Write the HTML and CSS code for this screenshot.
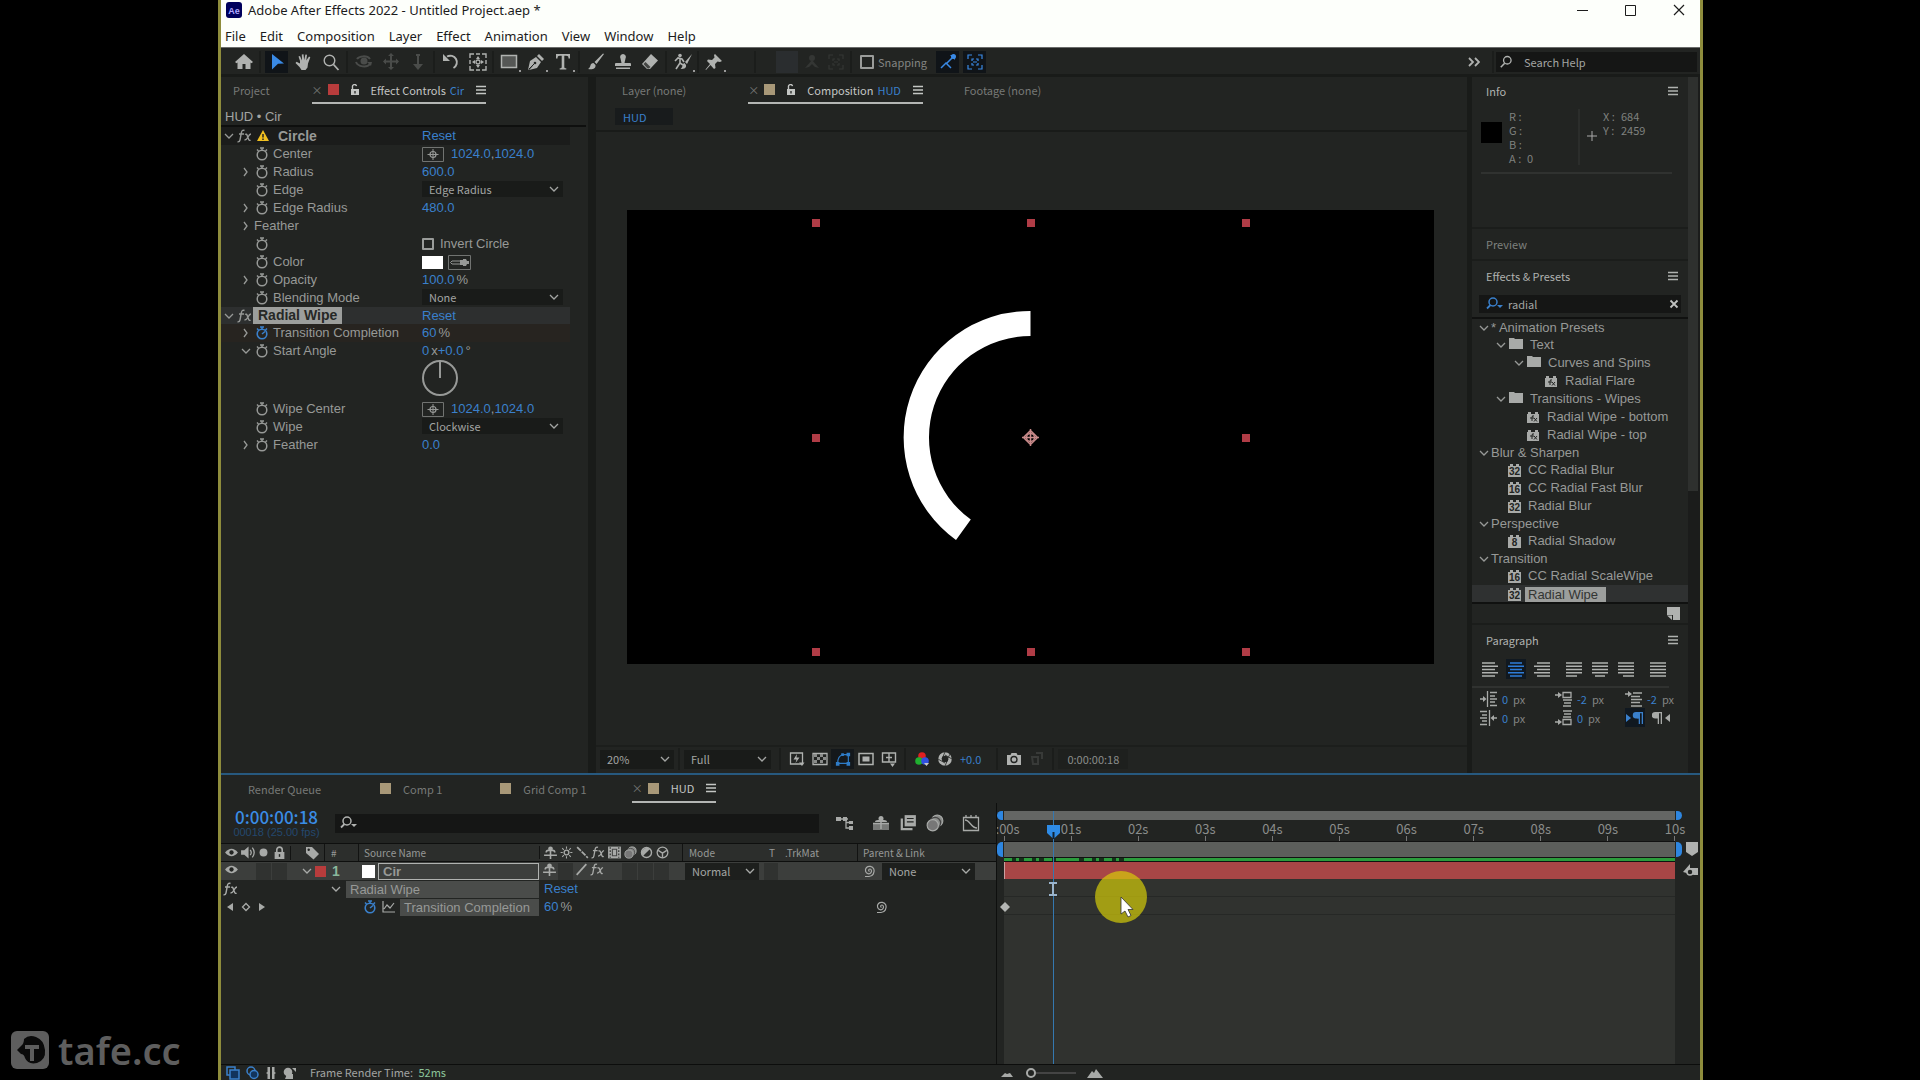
FILE: index.html
```html
<!DOCTYPE html>
<html lang="en">
<head>
<meta charset="utf-8">
<title>Adobe After Effects 2022 - Untitled Project.aep *</title>
<link rel="stylesheet" href="styles.css">
</head>
<body>
<svg class="sprite" aria-hidden="true">
  <symbol id="down" viewBox="0 0 10 10"><path d="M1 3l4 4 4-4" fill="none" stroke="currentColor" stroke-width="1.3"/></symbol>
  <symbol id="right" viewBox="0 0 10 10"><path d="M3 1l3 4-3 4" fill="none" stroke="currentColor" stroke-width="1.3"/></symbol>
  <symbol id="burger" viewBox="0 0 10 10"><path d="M0 1.5h10M0 5h10M0 8.500h10" stroke="currentColor" stroke-width="1.300"/></symbol>
  <symbol id="lock" viewBox="0 0 12 12"><path d="M2 5h8v6H2z" fill="currentColor"/><path d="M3.500 5V3a2 2 0 0 1 4-.8" fill="none" stroke="currentColor" stroke-width="1.400"/><path d="M6 7v2.500" stroke="#222422" stroke-width="1.300"/></symbol>
  <symbol id="padlock" viewBox="0 0 12 12"><path d="M1.500 5.500h9V12h-9z" fill="currentColor"/><path d="M3.500 5.500V3.500a2.500 2.500 0 0 1 5 0v2" fill="none" stroke="currentColor" stroke-width="1.500"/><path d="M6 7.500v2.500" stroke="#222422" stroke-width="1.300"/></symbol>
  <symbol id="watch" viewBox="0 0 14 14"><circle cx="7" cy="8" r="4.800" fill="none" stroke="currentColor" stroke-width="1.500"/><path d="M5 1h4M7 1v2.500M2 2.500l1.500 1.500M12 2.500l-1.500 1.500" stroke="currentColor" stroke-width="1.400"/></symbol>
  <symbol id="watchon" viewBox="0 0 14 14"><circle cx="7" cy="8" r="4.800" fill="none" stroke="currentColor" stroke-width="1.600"/><path d="M5 1h4M7 1v2.500M2 2.500l1.500 1.500M12 2.500l-1.500 1.500M7 8l3-2.500" stroke="currentColor" stroke-width="1.500"/></symbol>
  <symbol id="search" viewBox="0 0 16 16"><circle cx="9.500" cy="6" r="4.300" fill="none" stroke="currentColor" stroke-width="1.500"/><path d="M6.500 9.500L2 14" stroke="currentColor" stroke-width="1.800"/></symbol>
  <symbol id="searchmenu" viewBox="0 0 20 16"><circle cx="8" cy="6" r="4" fill="none" stroke="currentColor" stroke-width="1.500"/><path d="M5.500 9L2 12.500" stroke="currentColor" stroke-width="1.800"/><path d="M12 9h6l-3 3z" fill="currentColor"/></symbol>
  <symbol id="zoom" viewBox="0 0 18 18"><circle cx="7.500" cy="7.500" r="5.300" fill="none" stroke="currentColor" stroke-width="1.400"/><path d="M11.500 11.500L16.500 17" stroke="currentColor" stroke-width="1.800"/></symbol>
  <symbol id="home" viewBox="0 0 18 18"><path d="M9 1l9 8-1.500 1.300L15.500 9.500V16h-5v-5h-3v5h-5V9.500l-1 .8L0 9z" fill="currentColor"/></symbol>
  <symbol id="arrow" viewBox="0 0 18 18"><path d="M4 1l12 9.500-6 .3L4 16.500z" fill="currentColor"/></symbol>
  <symbol id="hand" viewBox="0 0 18 18"><path d="M5 8L3.500 3.500 5 3l2 4.500L6.800 1.500 8.500 1.300 9.200 7l1.200-5.500 1.600.3L11.300 7.500 14 3.500l1.300.8L13 10.500l-.5 4L10.500 17h-4L4.500 14 .5 10l1-1.300L5 10.500z" fill="currentColor"/></symbol>
  <symbol id="orbit" viewBox="0 0 18 18"><path d="M2 6c2-3 10-4 13 0M1 9c2 5 11 6 14 2" fill="none" stroke="currentColor" stroke-width="2"/><circle cx="9" cy="8" r="3.500" fill="currentColor"/><path d="M12 9l5 0-1 4z" fill="currentColor"/></symbol>
  <symbol id="pan" viewBox="0 0 18 18"><path d="M9 2v13M2 8.500h14" stroke="currentColor" stroke-width="2"/><path d="M9 0l3 3H6zM9 17l-3-3h6zM1 8.500l3-3v6zM17 8.500l-3-3v6z" fill="currentColor"/></symbol>
  <symbol id="dolly" viewBox="0 0 18 18"><path d="M9 1v12M7 2h4" stroke="currentColor" stroke-width="2"/><path d="M4 11h10l-5 6z" fill="currentColor"/></symbol>
  <symbol id="rotate" viewBox="0 0 18 18"><path d="M5 3.500a6.300 6.300 0 1 1 6.500 11.500" fill="none" stroke="currentColor" stroke-width="2"/><path d="M1 1v7h7z" fill="currentColor"/></symbol>
  <symbol id="anchor" viewBox="0 0 18 18"><path d="M1 5V1h4M13 1h4v4M17 13v4h-4M5 17H1v-4M7 1h4M7 17h4M1 7v4M17 7v4" fill="none" stroke="currentColor" stroke-width="1.400"/><path d="M9 3l2 3H7zM9 15l-2-3h4zM3 9l3-2v4zM15 9l-3 2V7z" fill="currentColor"/><circle cx="9" cy="9" r="2" fill="none" stroke="currentColor" stroke-width="1.300"/></symbol>
  <symbol id="rect" viewBox="0 0 18 18"><path d="M1.500 2.500h15v12h-15z" fill="#555755" stroke="currentColor" stroke-width="1.500"/></symbol>
  <symbol id="pen" viewBox="0 0 18 18"><path d="M1 17l2-9 6-4 5 5-4 6-8 2 4.500-4.500" fill="currentColor"/><path d="M10 3l2-2 5 5-2 2z" fill="currentColor"/><path d="M2 16l5-5" stroke="#222422"/><circle cx="8" cy="10" r="1.300" fill="#222422"/></symbol>
  <symbol id="type" viewBox="0 0 18 18"><path d="M2 1h14v4.500h-1.500c0-2-.5-2.700-2.500-2.700h-1.700V14c0 1 .5 1.300 2 1.300V16.500H5.700v-1.200c1.500 0 2-.3 2-1.300V2.800H6c-2 0-2.500.7-2.500 2.700H2z" fill="currentColor"/></symbol>
  <symbol id="brush" viewBox="0 0 18 18"><path d="M17 1l-1-.5L7.500 9l2 2zM6.500 10c-4 0-2 4-5.500 6 4 1 8 0 7.500-4z" fill="currentColor"/></symbol>
  <symbol id="stamp" viewBox="0 0 18 18"><path d="M9 1a3 3 0 0 1 2.500 4.500L10.500 10H16q1 0 1 1v2H1v-2q0-1 1-1h5.500L6.500 5.500A3 3 0 0 1 9 1zM2 14.500h14V16H2z" fill="currentColor"/></symbol>
  <symbol id="eraser" viewBox="0 0 18 18"><path d="M10 1l7 6.500L9 16H6l-5-5z" fill="currentColor"/><path d="M4.500 9l5 5-1.500 1.500H6.500L2.500 11z" fill="#444644"/></symbol>
  <symbol id="roto" viewBox="0 0 18 18"><circle cx="6" cy="2.500" r="1.800" fill="currentColor"/><path d="M1 8l3-3 4 1 2 3M6 5v5l-4 6M6 10l3 2" fill="none" stroke="currentColor" stroke-width="1.600"/><path d="M18 1l-7 8 2 2zM10.500 10c-3 1-1 4-4 6 4 0 6-1 5.500-4z" fill="currentColor"/></symbol>
  <symbol id="pin" viewBox="0 0 18 18"><path d="M10 1l7 7-2 1-2.500-.5L10 11l.5 4-1.500 1-3.500-4L1 17l-.5-.5L5 11 2 8l1-1.500L7 7l2.500-2.500L9 2z" fill="currentColor"/></symbol>
  <symbol id="snap1" viewBox="0 0 18 18"><path d="M2 15l5-5 5 5M8 10l6-6" fill="none" stroke="currentColor" stroke-width="1.500"/><path d="M11 2h5v5z" fill="currentColor"/><circle cx="14.500" cy="3.500" r="2.500" fill="currentColor"/></symbol>
  <symbol id="snap2" viewBox="0 0 18 18"><path d="M2 6V2h4M12 2h4v4M16 12v4h-4M6 16H2v-4M6 8V6h2M10 6h2v2M12 10v2h-2M8 12H6v-2M7 9h4" fill="none" stroke="currentColor" stroke-width="1.200"/></symbol>
  <symbol id="people" viewBox="0 0 18 18"><circle cx="9" cy="5" r="3" fill="currentColor"/><path d="M2 15l7-8 7 8-4-1-3-3-3 3z" fill="currentColor"/></symbol>
  <symbol id="warn" viewBox="0 0 14 14"><path d="M7 1l6 11H1z" fill="#f0c020"/><path d="M7 5v3.500M7 9.500v1.500" stroke="#222" stroke-width="1.500"/></symbol>
  <symbol id="target" viewBox="0 0 22 15"><path d="M.5.500h21v14H.5z" fill="none" stroke="#717371"/><circle cx="11" cy="7.500" r="3" fill="none" stroke="currentColor" stroke-width="1.200"/><path d="M5.500 7.500h11M11 2v11" stroke="currentColor"/></symbol>
  <symbol id="dropper" viewBox="0 0 24 15"><path d="M.5.500h22v14H.5z" fill="none" stroke="#717371"/><path d="M2.500 7.500L4 6h9v3H4z" fill="none" stroke="currentColor"/><path d="M12 5h3V4h3l1 2h2v3h-2l-1 2h-3v-1h-3z" fill="currentColor"/></symbol>
  <symbol id="fx" viewBox="0 0 16 14"><path d="M7.500 1.500C5.500.5 4.700 2 4.300 4L3 11c-.4 2-1.200 2-2.500 1.800M2 5h5M8 5.500q1.500-1 2.200 1l1.500 4q.6 1.500 1.800.5M14 5q-1.500 0-3 3t-3.500 3" fill="none" stroke="currentColor" stroke-width="1.400"/></symbol>
  <symbol id="folder" viewBox="0 0 16 12"><path d="M1 0h5l1 1h8v10H1z" fill="currentColor"/></symbol>
  <symbol id="preset" viewBox="0 0 14 13"><path d="M1 3h1V1h3v2h4V1h3v2h1v9H1z" fill="currentColor"/><path d="M8 5q-2-1-2 1.500V10M4 7h4M8 7l3 3.500M11 7l-3 3.500" stroke="#222422" fill="none"/></symbol>
  <symbol id="newitem" viewBox="0 0 13 13"><path d="M0 0h13v13H6V8H0z" fill="currentColor"/><path d="M0 8.500h5v4.500z" fill="currentColor"/></symbol>
  <symbol id="al" viewBox="0 0 16 15"><path d="M0 1h13M0 4.200h16M0 7.500h13M0 10.700h16M0 14h13" stroke="currentColor" stroke-width="1.400"/></symbol>
  <symbol id="ac" viewBox="0 0 16 15"><path d="M2 1h12M0 4.200h16M2 7.500h12M0 10.700h16M2 14h12" stroke="currentColor" stroke-width="1.400"/></symbol>
  <symbol id="ar" viewBox="0 0 16 15"><path d="M3 1h13M0 4.200h16M3 7.500h13M0 10.700h16M3 14h13" stroke="currentColor" stroke-width="1.400"/></symbol>
  <symbol id="jl" viewBox="0 0 16 15"><path d="M0 1h16M0 4.200h16M0 7.500h16M0 10.700h16M0 14h11" stroke="currentColor" stroke-width="1.400"/></symbol>
  <symbol id="jc" viewBox="0 0 16 15"><path d="M0 1h16M0 4.200h16M0 7.500h16M0 10.700h16M3 14h10" stroke="currentColor" stroke-width="1.400"/></symbol>
  <symbol id="jr" viewBox="0 0 16 15"><path d="M0 1h16M0 4.200h16M0 7.500h16M0 10.700h16M5 14h11" stroke="currentColor" stroke-width="1.400"/></symbol>
  <symbol id="jf" viewBox="0 0 16 15"><path d="M0 1h16M0 4.200h16M0 7.500h16M0 10.700h16M0 14h16" stroke="currentColor" stroke-width="1.400"/></symbol>
  <symbol id="indl" viewBox="0 0 17 16"><path d="M0 8h5M7.500 0v16M10 1.500h7M10 5h5M10 8h7M10 11h5M10 14.500h7" stroke="currentColor" stroke-width="1.300"/><path d="M3 5l3.500 3L3 11z" fill="currentColor"/></symbol>
  <symbol id="indr" viewBox="0 0 17 16"><path d="M17 8h-5M9.500 0v16M0 1.500h7M2 5h5M0 8h7M2 11h5M0 14.500h7" stroke="currentColor" stroke-width="1.300"/><path d="M14 5l-3.500 3 3.500 3z" fill="currentColor"/></symbol>
  <symbol id="spb" viewBox="0 0 17 16"><path d="M0 4h5M8 1.500h8v5H8zM8 9h9M9 12h7M8 15h8" fill="none" stroke="currentColor" stroke-width="1.300"/><path d="M3 1l4 3-4 3z" fill="currentColor"/></symbol>
  <symbol id="spa" viewBox="0 0 17 16"><path d="M0 12h5M8 9.500h8v5H8zM8 1h9M9 4h7M8 7h8" fill="none" stroke="currentColor" stroke-width="1.300"/><path d="M3 9l4 3-4 3z" fill="currentColor"/></symbol>
  <symbol id="first" viewBox="0 0 17 16"><path d="M0 3h5M8 2h9M6 5.500h9M6 8.500h11M6 11.500h9M6 15h11" stroke="currentColor" stroke-width="1.300"/><path d="M3 0l4 3-4 3z" fill="currentColor"/></symbol>
  <symbol id="ltr" viewBox="0 0 18 14"><path d="M0 3l5 4-5 4zM17 1v12h-1.300V2.300h-1.700V13h-1.300V7.500a3 3 0 0 1 0-6.500z" fill="currentColor"/><path d="M12.700 1H10a3 3 0 0 0 0 6.500h2.700z" fill="currentColor"/></symbol>
  <symbol id="rtl" viewBox="0 0 18 14"><path d="M18 3l-5 4 5 4zM10 1v12H8.700V2.300H7V13H5.700V7.500H3A3 3 0 0 1 3 1z" fill="currentColor"/></symbol>
  <symbol id="fast" viewBox="0 0 16 16"><path d="M1.500 2h12v11h-12z" fill="none" stroke="currentColor" stroke-width="1.300"/><path d="M8 3L4.500 8.500h3L6.500 12 10.500 6.500h-3z" fill="currentColor"/><path d="M10 11.500h5.500L13 15z" fill="currentColor"/></symbol>
  <symbol id="grid" viewBox="0 0 16 16"><path d="M1 2.500h14v11H1z" fill="none" stroke="currentColor" stroke-width="1.300"/><path d="M2 3h3v3H2zM8 3h3v3H8zM5 6h3v3H5zM11 6h3v3h-3zM2 9h3v3H2zM8 9h3v3H8z" fill="#8a8c8a"/></symbol>
  <symbol id="mask" viewBox="0 0 18 18"><path d="M3 14c0-5 2-9 6-10h6v10z" fill="none" stroke="currentColor" stroke-width="1.300"/><path d="M1 12.500h4v4H1zM13 12.500h4v4h-4zM13 2h4v4h-4zM7 2.500h3v3H7z" fill="currentColor"/></symbol>
  <symbol id="roi" viewBox="0 0 16 16"><path d="M1 2.500h14v11H1z" fill="none" stroke="currentColor" stroke-width="1.500"/><path d="M4.500 5.500h7v5h-7z" fill="currentColor"/></symbol>
  <symbol id="guides" viewBox="0 0 16 16"><path d="M1.500 2h13v9h-13zM8 2v9M5 6.500h6" fill="none" stroke="currentColor" stroke-width="1.400"/><path d="M9 12.500h5L11.500 16z" fill="currentColor"/></symbol>
  <symbol id="rgb" viewBox="0 0 16 16"><circle cx="8" cy="5" r="3.800" fill="#e02020"/><circle cx="5" cy="10" r="3.800" fill="#20b030"/><circle cx="11" cy="10" r="3.800" fill="#3050e0"/><path d="M10 12h5l-2.500 3z" fill="#c8c8c8"/></symbol>
  <symbol id="iris" viewBox="0 0 16 16"><circle cx="8" cy="8" r="5" fill="none" stroke="currentColor" stroke-width="3.600"/><path d="M8 1l-3 7M15 8L8 4M8 15l3-7M1 8l7 4M13 3L9 11" stroke="#222422" stroke-width=".8"/></symbol>
  <symbol id="camera" viewBox="0 0 16 16"><path d="M1 4h3.500l1-2h5l1 2H15v10H1z" fill="currentColor"/><circle cx="8" cy="8.500" r="3" fill="none" stroke="#222422" stroke-width="1.400"/></symbol>
  <symbol id="ghost" viewBox="0 0 16 16"><path d="M7 2h6v6M3 6h6v7H4z" fill="none" stroke="currentColor" stroke-width="2"/></symbol>
  <symbol id="flow" viewBox="0 0 18 16"><path d="M0 2h5v4H0zM7 2h4v4H7zM13 6h4v3h-4zM13 11h4v4h-4z" fill="currentColor"/><path d="M4 4h8M10 4v9h4M10 7.500h3" stroke="currentColor" fill="none" stroke-width="1.300"/></symbol>
  <symbol id="shyall" viewBox="0 0 18 16"><path d="M1 9h16v6H1z" fill="#777977"/><path d="M3 7q0-2 3-2h6q3 0 3 2z" fill="currentColor"/><path d="M9 2v12M1 8.500h16" stroke="currentColor" stroke-width="1.500"/><circle cx="9" cy="3.500" r="2.500" fill="currentColor"/></symbol>
  <symbol id="frames" viewBox="0 0 16 16"><path d="M5 1h10v10H5z" fill="currentColor"/><path d="M2.500 4v9.500H12" fill="none" stroke="currentColor" stroke-width="2"/><path d="M7 4h6M7 7h6" stroke="#222422"/></symbol>
  <symbol id="blur" viewBox="0 0 16 16"><circle cx="10" cy="6" r="5" fill="#8a8c8a" stroke="currentColor"/><circle cx="8" cy="8" r="5" fill="#8a8c8a" stroke="#444"/><circle cx="6" cy="10" r="5" fill="#777" stroke="currentColor"/></symbol>
  <symbol id="graph" viewBox="0 0 18 18"><path d="M1.500 3.500h15v13h-15zM4 1v3M9 1v3M14 1v3" fill="none" stroke="currentColor" stroke-width="1.300"/><path d="M3 6c5 0 6 8 12 8" fill="none" stroke="currentColor" stroke-width="1.300"/></symbol>
  <symbol id="minigraph" viewBox="0 0 14 12"><path d="M1 0v11h12M2 8l3-4 3 3 4-5" fill="none" stroke="currentColor" stroke-width="1.200"/></symbol>
  <symbol id="eye" viewBox="0 0 14 12"><path d="M1 6q6-7 12 0-6 7-12 0z" fill="currentColor"/><circle cx="7" cy="6" r="2" fill="#222422"/></symbol>
  <symbol id="speaker" viewBox="0 0 14 12"><path d="M1 4h3l4-3.500v11L4 8H1z" fill="currentColor"/><path d="M9.500 3.500q2 2.500 0 5M11.500 1.500q3.500 4.500 0 9" fill="none" stroke="currentColor" stroke-width="1.200"/></symbol>
  <symbol id="dot" viewBox="0 0 14 12"><circle cx="7" cy="6" r="3.700" fill="currentColor"/></symbol>
  <symbol id="tag" viewBox="0 0 14 14"><path d="M1 1h6l7 7-5.500 5.500L1 7z" fill="currentColor"/><circle cx="3.700" cy="3.700" r="1.200" fill="#222422"/></symbol>
  <symbol id="shy" viewBox="0 0 14 12"><path d="M1 8.500h12M7 3v9M3 6q0-2 2-2h4q2 0 2 2" fill="none" stroke="currentColor" stroke-width="1.500"/><circle cx="7" cy="2.500" r="2.200" fill="currentColor"/></symbol>
  <symbol id="sun" viewBox="0 0 14 12"><circle cx="7" cy="6" r="2.200" fill="none" stroke="currentColor" stroke-width="1.300"/><path d="M7 .5v2M7 9.500v2M1.500 6h2M10.500 6h2M3 2l1.500 1.500M11 2L9.500 3.500M3 10l1.500-1.500M11 10L9.500 8.500" stroke="currentColor"/></symbol>
  <symbol id="back" viewBox="0 0 14 12"><path d="M2 1l10 10" stroke="currentColor" stroke-width="1.600" stroke-dasharray="5 1"/></symbol>
  <symbol id="slash" viewBox="0 0 14 12"><path d="M2.500 11l9-10" stroke="currentColor" stroke-width="1.600"/></symbol>
  <symbol id="film" viewBox="0 0 14 12"><path d="M1 .5h12v11H1z" fill="currentColor"/><path d="M3 1v10M11 1v10" stroke="#222422" stroke-dasharray="1.500 1.500"/><path d="M5 3h4v6H5z" fill="none" stroke="#444644"/></symbol>
  <symbol id="half" viewBox="0 0 14 12"><circle cx="7" cy="6" r="4.700" fill="none" stroke="currentColor" stroke-width="1.300"/><path d="M10.300 2.700A4.700 4.700 0 0 0 3.700 9.300z" fill="currentColor"/></symbol>
  <symbol id="cube" viewBox="0 0 14 12"><circle cx="7" cy="6" r="5" fill="none" stroke="currentColor" stroke-width="1.200"/><path d="M7 11V6.500L3 4M7 6.500L11 4" fill="none" stroke="currentColor" stroke-width="1.300"/></symbol>
  <symbol id="spiral" viewBox="0 0 14 14"><path d="M7.500 7.500a1.300 1.300 0 1 1 1.500-2c1.500 2-.5 4.800-3 4.200S2.500 5.500 4.500 3.500 10.500 2 11.800 5s-.8 7.500-4.800 7.500H3" fill="none" stroke="currentColor" stroke-width="1.200"/></symbol>
  <symbol id="tri-l" viewBox="0 0 10 10"><path d="M8 1v8L2 5z" fill="currentColor"/></symbol>
  <symbol id="tri-r" viewBox="0 0 10 10"><path d="M2 1v8l6-4z" fill="currentColor"/></symbol>
  <symbol id="kf" viewBox="0 0 10 10"><path d="M5 1.500L8.500 5 5 8.500 1.500 5z" fill="none" stroke="currentColor" stroke-width="1.300"/></symbol>
  <symbol id="minimize" viewBox="0 0 12 12"><path d="M0 6.500h11" stroke="currentColor"/></symbol>
  <symbol id="maximize" viewBox="0 0 12 12"><path d="M.5 1.500h10v10H.5z" fill="none" stroke="currentColor"/></symbol>
  <symbol id="close" viewBox="0 0 12 12"><path d="M1 1l10 10M11 1L1 11" stroke="currentColor" stroke-width="1.200"/></symbol>
  <symbol id="more" viewBox="0 0 12 10"><path d="M1 1l4 4-4 4M7 1l4 4-4 4" fill="none" stroke="currentColor" stroke-width="1.800"/></symbol>
  <symbol id="stack" viewBox="0 0 14 14"><path d="M1 1h8v8H1z" fill="none" stroke="currentColor" stroke-width="1.500"/><path d="M4 4h9v9H4z" fill="#12345c" stroke="currentColor" stroke-width="1.500"/></symbol>
  <symbol id="rings" viewBox="0 0 14 14"><circle cx="6" cy="5" r="4" fill="none" stroke="currentColor" stroke-width="1.500"/><circle cx="9" cy="8.500" r="4" fill="#12345c" stroke="currentColor" stroke-width="1.500"/></symbol>
  <symbol id="braces" viewBox="0 0 14 14"><path d="M6 1H3.500v5L2 7l1.500 1v5H6zM8 1h2.500v5L12 7l-1.500 1v5H8z" fill="currentColor"/></symbol>
  <symbol id="render" viewBox="0 0 14 14"><circle cx="5" cy="6" r="4.300" fill="currentColor"/><path d="M4 8h6v5H2zM9 2h4v4z" fill="currentColor"/></symbol>
  <symbol id="marker" viewBox="0 0 12 14"><path d="M0 0h12v10l-6 4-6-4z" fill="currentColor"/></symbol>
  <symbol id="compbtn" viewBox="0 0 16 14"><path d="M0 9l7-8v4h8v7h-4z" fill="currentColor"/><circle cx="7" cy="9" r="3" fill="#222422" stroke="currentColor" stroke-width="1.500"/></symbol>
  <symbol id="hill1" viewBox="0 0 16 10"><path d="M2 9l4-4 2 1 3-1 3 4z" fill="currentColor"/></symbol>
  <symbol id="hill2" viewBox="0 0 16 10"><path d="M0 10l5-7 2 2 2-4 7 9z" fill="currentColor"/></symbol>
</svg>

<div class="watermark">
  <svg viewBox="0 0 40 40"><rect x="1" y="1" width="38" height="38" rx="6" fill="#5e5e5e"/><path d="M14 9q5-5 12-2 8 3 9 13t-8 13q-9 2-12-5-1-4-4-4l-4-4 4-4q3-2 3-7z" fill="#0a0a0a"/><path d="M15 15h14v4h-5v12h-4V19h-5z" fill="#5e5e5e"/></svg>
  <span>tafe.cc</span>
</div>

<div class="app">
  <header class="titlebar">
    <svg class="logo" viewBox="0 0 16 16"><rect width="16" height="16" rx="3" fill="#00005b"/><text x="8" y="12" text-anchor="middle">Ae</text></svg>
    <h1>Adobe After Effects 2022 - Untitled Project.aep *</h1>
    <div class="winbtns">
      <button aria-label="Minimize"><svg class="i12"><use href="#minimize"/></svg></button>
      <button aria-label="Maximize"><svg class="i12"><use href="#maximize"/></svg></button>
      <button aria-label="Close"><svg class="i12"><use href="#close"/></svg></button>
    </div>
  </header>
  <nav class="menubar">
    <button>File</button><button>Edit</button><button>Composition</button><button>Layer</button><button>Effect</button><button>Animation</button><button>View</button><button>Window</button><button>Help</button>
  </nav>

  <div class="toolbar">
    <button class="tool" aria-label="Home"><svg><use href="#home"/></svg></button><i class="sep"></i>
    <button class="tool on" aria-label="Selection"><svg><use href="#arrow"/></svg></button>
    <button class="tool" aria-label="Hand"><svg><use href="#hand"/></svg></button>
    <button class="tool" aria-label="Zoom"><svg><use href="#zoom"/></svg></button><i class="sep"></i>
    <button class="tool off" aria-label="Orbit"><svg><use href="#orbit"/></svg></button>
    <button class="tool off" aria-label="Pan"><svg><use href="#pan"/></svg></button>
    <button class="tool off" aria-label="Dolly"><svg><use href="#dolly"/></svg></button><i class="sep"></i>
    <button class="tool" aria-label="Rotate"><svg><use href="#rotate"/></svg></button>
    <button class="tool" aria-label="Anchor point"><svg><use href="#anchor"/></svg></button><i class="sep thin"></i>
    <button class="tool sub" aria-label="Rectangle"><svg><use href="#rect"/></svg></button>
    <button class="tool sub" aria-label="Pen"><svg><use href="#pen"/></svg></button>
    <button class="tool sub" aria-label="Type"><svg><use href="#type"/></svg></button><i class="sep"></i>
    <button class="tool" aria-label="Brush"><svg><use href="#brush"/></svg></button>
    <button class="tool" aria-label="Clone stamp"><svg><use href="#stamp"/></svg></button>
    <button class="tool" aria-label="Eraser"><svg><use href="#eraser"/></svg></button><i class="sep"></i>
    <button class="tool sub" aria-label="Roto brush"><svg><use href="#roto"/></svg></button><i class="sep thin"></i>
    <button class="tool sub" aria-label="Puppet pin"><svg><use href="#pin"/></svg></button>
    <i class="sep wide"></i>
    <button class="tool dim fill" aria-label="Fill"></button>
    <button class="tool dim" aria-label="Stroke"><svg><use href="#people"/></svg></button>
    <button class="tool dim" aria-label="Shape"><svg><use href="#snap2"/></svg></button><i class="sep"></i>
    <label class="snapping"><input type="checkbox">Snapping</label>
    <button class="tool on" aria-label="Snap to edges"><svg><use href="#snap1"/></svg></button>
    <button class="tool on" aria-label="Snap to features"><svg><use href="#snap2"/></svg></button>
    <div class="toolend">
      <button class="tool more" aria-label="More"><svg class="i12"><use href="#more"/></svg></button><i class="sep"></i>
      <label class="helpsearch"><svg class="i14"><use href="#search"/></svg><input type="text" placeholder="Search Help" aria-label="Search Help"></label>
    </div>
  </div>

  <main class="panels">
    <section class="controls">
      <div class="tabs">
        <button class="tab first">Project</button>
        <div class="tab active"><span class="x">×</span><i class="chip red"></i><svg class="i12"><use href="#lock"/></svg><button>Effect Controls <b>Cir</b></button><svg class="i10"><use href="#burger"/></svg></div>
      </div>
      <p class="path">HUD • Cir</p>
      <div class="props">
        <div class="prop head"><div class="name"><svg class="tw"><use href="#down"/></svg><svg class="fx"><use href="#fx"/></svg><svg class="i14 mid"><use href="#warn"/></svg><strong>Circle</strong></div><button>Reset</button></div>
        <div class="prop l1"><div class="name"><i class="tw"></i><svg class="sw"><use href="#watch"/></svg>Center</div><svg class="pt"><use href="#target"/></svg><button>1024.0</button>,<button>1024.0</button></div>
        <div class="prop l1"><div class="name"><svg class="tw"><use href="#right"/></svg><svg class="sw"><use href="#watch"/></svg>Radius</div><button>600.0</button></div>
        <div class="prop l1"><div class="name"><i class="tw"></i><svg class="sw"><use href="#watch"/></svg><label for="edge">Edge</label></div><span class="pick"><select id="edge"><option>Edge Radius</option></select><svg class="i10"><use href="#down"/></svg></span></div>
        <div class="prop l1"><div class="name"><svg class="tw"><use href="#right"/></svg><svg class="sw"><use href="#watch"/></svg>Edge Radius</div><button>480.0</button></div>
        <div class="prop l1"><div class="name"><svg class="tw"><use href="#right"/></svg>Feather</div></div>
        <div class="prop l1"><div class="name"><i class="tw"></i><svg class="sw"><use href="#watch"/></svg></div><label class="check"><input type="checkbox">Invert Circle</label></div>
        <div class="prop l1"><div class="name"><i class="tw"></i><svg class="sw"><use href="#watch"/></svg>Color</div><button class="white" aria-label="Color"></button><svg class="eyed"><use href="#dropper"/></svg></div>
        <div class="prop l1"><div class="name"><svg class="tw"><use href="#right"/></svg><svg class="sw"><use href="#watch"/></svg>Opacity</div><button>100.0</button><span class="unit">%</span></div>
        <div class="prop l1"><div class="name"><i class="tw"></i><svg class="sw"><use href="#watch"/></svg><label for="blend">Blending Mode</label></div><span class="pick"><select id="blend"><option>None</option></select><svg class="i10"><use href="#down"/></svg></span></div>
        <div class="prop head sel"><div class="name"><svg class="tw"><use href="#down"/></svg><svg class="fx"><use href="#fx"/></svg><strong>Radial Wipe</strong></div><button>Reset</button></div>
        <div class="prop l1 keyed"><div class="name"><svg class="tw"><use href="#right"/></svg><svg class="sw"><use href="#watchon"/></svg>Transition Completion</div><button>60</button><span class="unit">%</span></div>
        <div class="prop l1"><div class="name"><svg class="tw"><use href="#down"/></svg><svg class="sw"><use href="#watch"/></svg>Start Angle</div><button>0</button><span class="unit">x</span><button>+0.0</button><span class="unit">°</span></div>
        <div class="prop l1 dial"><div class="name"></div><svg viewBox="0 0 36 36"><circle cx="18" cy="18" r="17" fill="none" stroke="currentColor" stroke-width="2"/><path d="M18 1v17" stroke="currentColor" stroke-width="2"/></svg></div>
        <div class="prop l1"><div class="name"><i class="tw"></i><svg class="sw"><use href="#watch"/></svg>Wipe Center</div><svg class="pt"><use href="#target"/></svg><button>1024.0</button>,<button>1024.0</button></div>
        <div class="prop l1"><div class="name"><i class="tw"></i><svg class="sw"><use href="#watch"/></svg><label for="wipe">Wipe</label></div><span class="pick"><select id="wipe"><option>Clockwise</option></select><svg class="i10"><use href="#down"/></svg></span></div>
        <div class="prop l1"><div class="name"><svg class="tw"><use href="#right"/></svg><svg class="sw"><use href="#watch"/></svg>Feather</div><button>0.0</button></div>
      </div>
    </section>

    <section class="viewer">
      <div class="tabs">
        <button class="tab lead">Layer (none)</button>
        <div class="tab active"><span class="x">×</span><i class="chip"></i><svg class="i12"><use href="#lock"/></svg><button>Composition <b>HUD</b></button><svg class="i10"><use href="#burger"/></svg></div>
        <button class="tab last">Footage (none)</button>
      </div>
      <div class="crumb"><button>HUD</button></div>
      <div class="stage">
        <svg class="canvas" viewBox="0 0 807 454">
          <rect width="807" height="454" fill="#000"/>
          <path d="M403.500 101V126A101.500 101.500 0 0 0 343.800 309.600L329 330A126.500 126.500 0 0 1 403.500 101z" fill="#fff"/>
          <g fill="#b03c46"><rect x="185" y="9" width="8" height="8"/><rect x="400" y="9" width="8" height="8"/><rect x="615" y="9" width="8" height="8"/><rect x="185" y="224" width="8" height="8"/><rect x="615" y="224" width="8" height="8"/><rect x="185" y="438" width="8" height="8"/><rect x="400" y="438" width="8" height="8"/><rect x="615" y="438" width="8" height="8"/></g>
          <g fill="none" stroke="#c98a8a" stroke-width="1.500"><circle cx="403.500" cy="227.500" r="4"/><path d="M395 227.500h17M403.500 219v17M403.500 220.500l7 7-7 7-7-7z"/></g>
        </svg>
      </div>
      <div class="viewbar">
        <span class="pick zoomsel"><select aria-label="Magnification"><option>20%</option></select><svg class="i10"><use href="#down"/></svg></span><i class="sep"></i>
        <span class="pick ressel"><select aria-label="Resolution"><option>Full</option></select><svg class="i10"><use href="#down"/></svg></span><i class="sep"></i>
        <button class="vb" aria-label="Fast previews"><svg><use href="#fast"/></svg></button>
        <button class="vb" aria-label="Transparency grid"><svg><use href="#grid"/></svg></button>
        <button class="vb on" aria-label="Mask visibility"><svg><use href="#mask"/></svg></button>
        <button class="vb" aria-label="Region of interest"><svg><use href="#roi"/></svg></button>
        <button class="vb" aria-label="Guides"><svg><use href="#guides"/></svg></button><i class="sep"></i>
        <button class="vb" aria-label="Channels"><svg><use href="#rgb"/></svg></button>
        <button class="vb" aria-label="Reset exposure"><svg><use href="#iris"/></svg></button>
        <button class="expo">+0.0</button><i class="sep"></i>
        <button class="vb" aria-label="Snapshot"><svg><use href="#camera"/></svg></button>
        <button class="vb dim" aria-label="Show snapshot"><svg><use href="#ghost"/></svg></button><i class="sep"></i>
        <button class="tc">0:00:00:18</button>
      </div>
    </section>

    <aside class="side">
      <section class="info">
        <h2>Info<svg class="i10"><use href="#burger"/></svg></h2>
        <div class="infogrid">
          <i class="black"></i>
          <dl class="rgba"><dt>R :</dt><dd></dd><dt>G :</dt><dd></dd><dt>B :</dt><dd></dd><dt>A :</dt><dd>0</dd></dl>
          <svg class="plus" viewBox="0 0 10 10"><path d="M0 5h10M5 0v10" stroke="currentColor"/></svg>
          <dl class="xy"><dt>X :</dt><dd>684</dd><dt>Y :</dt><dd>2459</dd></dl>
        </div>
      </section>
      <section class="preview"><h2>Preview</h2></section>
      <section class="presets">
        <h2>Effects &amp; Presets<svg class="i10"><use href="#burger"/></svg></h2>
        <label class="find"><svg><use href="#searchmenu"/></svg><input type="text" value="radial" aria-label="Search effects"><button aria-label="Clear"><svg class="i10" viewBox="0 0 10 10"><path d="M1.500 1.500l7 7M8.500 1.500l-7 7" stroke="currentColor" stroke-width="1.800"/></svg></button></label>
        <ul class="tree">
          <li class="d0"><svg class="i10"><use href="#down"/></svg>* Animation Presets</li>
          <li class="d1"><svg class="i10"><use href="#down"/></svg><svg class="fo"><use href="#folder"/></svg>Text</li>
          <li class="d2"><svg class="i10"><use href="#down"/></svg><svg class="fo"><use href="#folder"/></svg>Curves and Spins</li>
          <li class="d4"><svg class="br"><use href="#preset"/></svg>Radial Flare</li>
          <li class="d1"><svg class="i10"><use href="#down"/></svg><svg class="fo"><use href="#folder"/></svg>Transitions - Wipes</li>
          <li class="d3"><svg class="br"><use href="#preset"/></svg>Radial Wipe - bottom</li>
          <li class="d3"><svg class="br"><use href="#preset"/></svg>Radial Wipe - top</li>
          <li class="d0"><svg class="i10"><use href="#down"/></svg>Blur &amp; Sharpen</li>
          <li class="dx"><span class="bit">32</span>CC Radial Blur</li>
          <li class="dx"><span class="bit">16</span>CC Radial Fast Blur</li>
          <li class="dx"><span class="bit">32</span>Radial Blur</li>
          <li class="d0"><svg class="i10"><use href="#down"/></svg>Perspective</li>
          <li class="dx"><span class="bit">8</span>Radial Shadow</li>
          <li class="d0"><svg class="i10"><use href="#down"/></svg>Transition</li>
          <li class="dx"><span class="bit">16</span>CC Radial ScaleWipe</li>
          <li class="dx sel"><span class="bit">32</span><mark>Radial Wipe</mark></li>
        </ul>
        <div class="listfoot"><button aria-label="New preset"><svg><use href="#newitem"/></svg></button></div>
      </section>
      <section class="paragraph">
        <h2>Paragraph<svg class="i10"><use href="#burger"/></svg></h2>
        <div class="aligns">
          <button aria-label="Align left"><svg><use href="#al"/></svg></button>
          <button class="on" aria-label="Align center"><svg><use href="#ac"/></svg></button>
          <button aria-label="Align right"><svg><use href="#ar"/></svg></button>
          <button class="spaced" aria-label="Justify last left"><svg><use href="#jl"/></svg></button>
          <button aria-label="Justify last center"><svg><use href="#jc"/></svg></button>
          <button aria-label="Justify last right"><svg><use href="#jr"/></svg></button>
          <button class="spaced" aria-label="Justify all"><svg><use href="#jf"/></svg></button>
        </div>
        <div class="indents">
          <div><svg><use href="#indl"/></svg><button>0</button>px</div>
          <div><svg><use href="#spb"/></svg><button>-2</button>px</div>
          <div><svg><use href="#first"/></svg><button>-2</button>px</div>
          <div><svg><use href="#indr"/></svg><button>0</button>px</div>
          <div><svg><use href="#spa"/></svg><button>0</button>px</div>
          <div class="dir"><button class="on" aria-label="Left to right"><svg><use href="#ltr"/></svg></button><button aria-label="Right to left"><svg><use href="#rtl"/></svg></button></div>
        </div>
      </section>
    </aside>
    <div class="scroll"><i></i></div>
  </main>

  <section class="timeline">
    <div class="tabs">
      <button class="tab rq">Render Queue</button>
      <button class="tab c1"><i class="chip"></i>Comp 1</button>
      <button class="tab c2"><i class="chip"></i>Grid Comp 1</button>
      <div class="tab active"><span class="x">×</span><i class="chip"></i><button>HUD</button><svg class="i10"><use href="#burger"/></svg></div>
    </div>
    <div class="tlbody">
      <div class="layers">
        <div class="tltop">
          <div class="clock"><button>0:00:00:18</button><small>00018 (25.00 fps)</small></div>
          <label class="tlfind"><svg><use href="#searchmenu"/></svg><input type="text" aria-label="Search layers"></label>
          <div class="tlicons">
            <button aria-label="Flowchart"><svg><use href="#flow"/></svg></button>
            <button aria-label="Hide shy layers"><svg><use href="#shyall"/></svg></button>
            <button aria-label="Frame blending"><svg><use href="#frames"/></svg></button>
            <button aria-label="Motion blur"><svg><use href="#blur"/></svg></button>
            <button aria-label="Graph editor"><svg><use href="#graph"/></svg></button>
          </div>
        </div>
        <div class="row cols">
          <div class="c-av"><svg><use href="#eye"/></svg><svg><use href="#speaker"/></svg><svg><use href="#dot"/></svg><svg><use href="#padlock"/></svg></div>
          <div class="c-tag"><svg><use href="#tag"/></svg></div>
          <div class="c-num">#</div>
          <div class="c-src">Source Name</div>
          <div class="c-sw"><svg><use href="#shy"/></svg><svg><use href="#sun"/></svg><svg><use href="#back"/></svg><svg><use href="#fx"/></svg><svg><use href="#film"/></svg><svg><use href="#blur"/></svg><svg><use href="#half"/></svg><svg><use href="#cube"/></svg></div>
          <div class="c-mode">Mode</div>
          <div class="c-t">T</div>
          <div class="c-trk">.TrkMat</div>
          <div class="c-par">Parent &amp; Link</div>
        </div>
        <div class="row layer">
          <div class="c-av"><svg><use href="#eye"/></svg><i></i><i class="well"></i><i class="well"></i></div>
          <div class="c-tag"><svg class="i10"><use href="#down"/></svg><i class="chip red"></i></div>
          <div class="c-num one">1</div>
          <div class="c-src"><i class="solid"></i><input type="text" value="Cir" aria-label="Layer name"></div>
          <div class="c-sw"><svg><use href="#shy"/></svg><i class="well"></i><svg><use href="#slash"/></svg><svg><use href="#fx"/></svg><i></i><i class="well"></i><i class="well"></i><i class="well"></i></div>
          <div class="c-mode"><span class="pick"><select aria-label="Mode"><option>Normal</option></select><svg class="i10"><use href="#down"/></svg></span></div>
          <div class="c-t"><i class="well"></i></div>
          <div class="c-trk"></div>
          <div class="c-par"><svg class="i14"><use href="#spiral"/></svg><span class="pick"><select aria-label="Parent"><option>None</option></select><svg class="i10"><use href="#down"/></svg></span></div>
        </div>
        <div class="row fxrow">
          <div class="c-lead"><svg class="fx"><use href="#fx"/></svg></div><svg class="i10"><use href="#down"/></svg><span class="lab">Radial Wipe</span><button>Reset</button>
        </div>
        <div class="row keyrow">
          <div class="c-keys"><button aria-label="Previous keyframe"><svg class="i10"><use href="#tri-l"/></svg></button><button aria-label="Keyframe"><svg class="i10"><use href="#kf"/></svg></button><button aria-label="Next keyframe"><svg class="i10"><use href="#tri-r"/></svg></button></div>
          <svg class="i14 blue"><use href="#watchon"/></svg><svg class="mini"><use href="#minigraph"/></svg><span class="lab">Transition Completion</span>
          <div class="c-val"><button>60</button><span class="unit">%</span></div><svg class="i14"><use href="#spiral"/></svg>
        </div>
      </div>
      <div class="tracks">
        <div class="navbar"><i class="cap l"></i><i class="cap r"></i></div>
        <ol class="ruler"><li>0:00s</li><li>01s</li><li>02s</li><li>03s</li><li>04s</li><li>05s</li><li>06s</li><li>07s</li><li>08s</li><li>09s</li><li>10s</li></ol>
        <div class="workbar"><i class="cap l"></i><i class="cap r"></i></div>
        <div class="cache"></div>
        <div class="bar"></div>
        <div class="lane"></div>
        <div class="lane"></div>
        <div class="lane rest"></div>
        <svg class="mk" viewBox="0 0 12 14"><use href="#marker"/></svg>
        <svg class="cb" viewBox="0 0 16 14"><use href="#compbtn"/></svg>
        <svg class="keyframe" viewBox="0 0 10 10"><path d="M5 0l5 5-5 5-5-5z" fill="#b4b6b4"/></svg>
        <div class="playhead"><svg viewBox="0 0 13 14"><path d="M0 0h13v8l-6.500 6L0 8z" fill="#2e8be6"/><path d="M6.500 7v7" stroke="#123" stroke-width="2"/></svg></div>
        <svg class="ibeam" viewBox="0 0 8 14"><path d="M0 1h8M0 13h8M4 1v12" stroke="#9ab4cc" stroke-width="2"/></svg>
        <svg class="pointer" viewBox="0 0 54 54"><circle cx="27" cy="27" r="26" fill="#d8d008" fill-opacity=".68"/><path d="M27 27v17l4-3 3 6 3-1.500-3-6h5z" fill="#fff" stroke="#333" stroke-width=".8"/></svg>
      </div>
    </div>
    <footer class="status">
      <button class="blue" aria-label="Toggle switches"><svg class="i14"><use href="#stack"/></svg></button>
      <button class="blue" aria-label="Toggle modes"><svg class="i14"><use href="#rings"/></svg></button>
      <button aria-label="In and out"><svg class="i14"><use href="#braces"/></svg></button>
      <button aria-label="Render time"><svg class="i14"><use href="#render"/></svg></button>
      <span class="frt">Frame Render Time: <b>52ms</b></span>
      <div class="zoomer"><svg><use href="#hill1"/></svg><input type="range" value="0" aria-label="Timeline zoom"><svg><use href="#hill2"/></svg></div>
    </footer>
  </section>
</div>
</body>
</html>
```
FILE: styles.css
```css
:root {
  --bg: #222422;
  --dark: #151615;
  --edge: #191b19;
  --text: #a3a5a3;
  --blue: #3a80cc;
  --ui: "Noto Sans CJK SC", sans-serif;
  --arial: "Liberation Sans", sans-serif;
}
* { box-sizing: border-box; }
body { margin: 0; background: #000; color: var(--text); font: 11px/16px var(--ui); }
button, input, select { font: inherit; color: inherit; background: none; border: 0; margin: 0; padding: 0; }
button { display: inline-flex; align-items: center; justify-content: center; white-space: nowrap; }
svg { flex: none; display: block; }
h1, h2, p, ul, ol, dl, dd { margin: 0; padding: 0; font-weight: 400; list-style: none; }
b { font-weight: 400; color: var(--blue); }
.sprite { position: absolute; width: 0; height: 0; }
.i10 { width: 10px; height: 10px; }
.i12 { width: 12px; height: 12px; }
.i14 { width: 14px; height: 14px; }
.blue { color: var(--blue); }
.unit { padding-left: 2px; }

.watermark { position: absolute; left: 10px; bottom: 8px; display: flex; align-items: center; gap: 8px; color: #5e5e5e; font: 600 38px/44px "Noto Sans", sans-serif; }
.watermark svg { width: 40px; height: 40px; }

.app { height: 100vh; margin: 0 217px 0 218px; border: solid #8e8c3c; border-width: 0 3px; background: var(--bg); display: flex; flex-direction: column; overflow: hidden; }

.titlebar, .menubar { background: #fdfffb; color: #1c1c1c; display: flex; align-items: center; flex: none; }
.titlebar { height: 20px; padding-left: 5px; }
.titlebar h1 { font: 13px/20px "Noto Sans", sans-serif; margin-left: 6px; }
.logo { width: 16px; height: 16px; }
.logo text { font: 700 9px "Liberation Sans", sans-serif; fill: #b0a8ff; }
.winbtns { margin-left: auto; display: flex; }
.winbtns button { width: 48px; height: 20px; padding-left: 5px; }
.menubar { height: 27px; padding: 4px 0 0 4px; gap: 14px; font: 13px/20px "Noto Sans", sans-serif; }

.toolbar { height: 30px; flex: none; display: flex; align-items: center; padding: 2px 3px 1px 9px; border-bottom: 3px solid var(--edge); border-top: 1px solid #6a6c6a; color: #b0b2b0; }
.tool { width: 27px; height: 22px; flex: none; }
.tool svg { width: 18px; height: 18px; }
.tool.more { margin-right: 3px; }
.tool.more svg { width: 12px; height: 12px; }
.tool.on { background: #101418; background-clip: content-box; padding: 0 2px; color: #3a8ae6; }
.tool.off { color: #4a4c4a; }
.tool.dim { color: #343634; width: 24px; }
.tool.fill { background: #2a2d2f; width: 22px; margin: 0 2px 0 18px; }
.tool.sub { background: linear-gradient(#999, #999) 24px 19px / 2px 2px no-repeat; }
.sep { width: 2px; height: 22px; margin: 0 2px; background: #1b1d1b; flex: none; }
.sep.thin { margin: 0 1px; }
.sep.wide { margin-left: 27px; }
.snapping { display: flex; align-items: center; gap: 4px; margin: 0 7px 0 6px; color: #838583; }
input[type=checkbox] { appearance: none; width: 14px; height: 14px; border: 2px solid #9a9c9a; border-radius: 1px; }
.toolend { margin-left: auto; display: flex; align-items: center; }
.helpsearch { width: 201px; height: 20px; background: var(--dark); display: flex; align-items: center; gap: 11px; padding-left: 3px; }
.helpsearch input { flex: 1; min-width: 0; }
.helpsearch input::placeholder { color: var(--text); opacity: 1; }

.panels { height: 698px; flex: none; display: flex; border-bottom: 2px solid #27597f; }
.controls { width: 375px; flex: none; border-right: 8px solid var(--edge); }
.tabs { height: 27px; display: flex; align-items: stretch; }
.tab { color: #777977; padding-bottom: 1px; }
.tab.active { display: flex; align-items: center; color: #c4c6c4; border-bottom: 2px solid #b4b6b4; padding: 0; }
.x { color: #777977; width: 16px; }
.chip { width: 11px; height: 11px; background: #a89878; flex: none; }
.chip.red { background: #b83c3c; }
.controls .first { margin: 0 42px 0 12px; }
.tab.active .i12 { margin: 0 10px; }
.tab.active .i10 { margin-left: 12px; }
.tab.active button { gap: 4px; }
.path { font: 13px/26px var(--arial); height: 23px; padding-left: 4px; border-bottom: 2px solid #0e0f0e; margin-right: 2px; }
.props { font: 13px/18px var(--arial); color: #979997; }
.prop { height: 18px; display: flex; align-items: center; margin-right: 18px; }
.prop > button, .row > button, .c-val button { color: var(--blue); }
.name { width: 201px; height: 18px; display: flex; align-items: center; flex: none; }
.l1 .name { padding-left: 17px; }
.tw { width: 16px; height: 10px; flex: none; }
.fx { width: 16px; height: 14px; }
.sw { width: 14px; height: 14px; margin: 0 4px 0 1px; }
.mid { margin-left: 3px; }
strong { font-size: 14px; padding: 0 5px; }
.head { background: #1b1c1b; }
.head .i14 + strong { padding-left: 8px; }
.head.sel { background: #2d2f2f; height: 17px; }
.sel strong { background: #9c9e9c; color: #262826; height: 17px; line-height: 17px; }
.keyed { background: #272420; }
.keyed .sw { color: var(--blue); }
.pt { width: 22px; height: 15px; margin-right: 7px; }
.check { display: flex; align-items: center; gap: 6px; }
.props input[type=checkbox] { width: 12px; height: 12px; }
.white { width: 21px; height: 13px; background: #fff; margin-right: 5px; }
.eyed { width: 24px; height: 15px; }
.pick { display: flex; align-items: center; background: #191b19; font: 11px/16px var(--ui); color: var(--text); }
.pick select { appearance: none; flex: 1; min-width: 0; padding-left: 7px; height: 16px; }
.pick .i10 { margin-right: 4px; }
.prop .pick { width: 141px; height: 16px; align-self: flex-start; }
.prop.dial { height: 40px; align-items: flex-start; }
.dial svg { width: 36px; height: 36px; }

.viewer { flex: 1; min-width: 0; display: flex; flex-direction: column; }
.viewer .lead { margin: 0 62px 0 26px; }
.viewer .last { margin-left: 41px; }
.crumb { height: 28px; padding: 4px 19px; border-bottom: 2px solid var(--edge); }
.crumb button { width: 58px; height: 17px; background: #181b1c; color: var(--blue); justify-content: flex-start; padding-left: 8px; }
.stage { flex: 1; min-height: 0; display: flex; align-items: center; padding: 0 33px 4px 31px; }
.canvas { flex: 1; min-width: 0; max-height: 100%; }
.viewbar { height: 28px; border-top: 2px solid #1c1e1c; display: flex; align-items: center; padding: 0 4px 2px; }
.viewbar .sep { margin: 0 4px; }
.viewbar .pick { height: 19px; }
.zoomsel { width: 74px; }
.ressel { width: 87px; margin-right: 4px; }
.vb { width: 23px; height: 20px; color: #b0b2b0; }
.vb svg { width: 16px; height: 16px; }
.vb.on { color: #2e7cc8; background: #14181b; }
.vb.dim { color: #383a38; }
.expo { color: var(--blue); padding: 0 11px 0 4px; }
.tc { width: 70px; color: #8b8d8b; background: #1e201e; height: 20px; }

.side { width: 221px; flex: none; border-left: 5px solid var(--edge); display: flex; flex-direction: column; }
.side h2 { font-size: 11px; line-height: 16px; height: 30px; padding: 0 10px 0 14px; display: flex; align-items: center; justify-content: space-between; color: #b0b2b0; }
.side section { border-bottom: 2px solid #1b1d1b; flex: none; }
.side .info { height: 152px; }
.side .info h2 { height: 27px; }
.infogrid { display: grid; grid-template-columns: 21px 71px 9px 1fr; column-gap: 7px; height: 70px; margin: 0 16px 0 9px; border-bottom: 2px solid #303230; padding: 5px 0; color: #7f817f; }
.black { height: 21px; background: #000; margin-top: 13px; }
.infogrid dl { display: grid; grid-template-columns: 12px 1fr; column-gap: 6px; grid-auto-rows: 14px; line-height: 14px; align-content: start; white-space: nowrap; }
.rgba { border-right: 2px solid #2b2d2b; height: 56px; }
.plus { width: 10px; height: 10px; margin-top: 22px; color: #aaa; }
.preview { height: 32px; }
.side .preview h2 { color: #7f817f; }
.find { display: flex; align-items: center; height: 18px; margin: 4px 7px 0; background: var(--dark); padding: 0 2px 0 6px; }
.find > svg { width: 20px; height: 16px; color: var(--blue); margin-right: 3px; }
.find input { flex: 1; min-width: 0; }
.find button { color: #c0c2c0; width: 10px; height: 10px; }
.tree { height: 287px; margin-top: 4px; border: solid #101110; border-width: 2px 0; overflow: hidden; font: 13px/18px var(--arial); color: #979997; }
.tree li { height: 18px; display: flex; align-items: center; white-space: nowrap; }
.tree .d0 { height: 17px; padding-left: 7px; gap: 2px; }
.d1 { padding-left: 24px; }
.d2 { padding-left: 42px; }
.d3 { padding-left: 54px; }
.d4 { padding-left: 72px; }
.dx { padding-left: 36px; }
.fo { width: 16px; height: 12px; margin: 0 6px 3px 2px; color: #a8aaa8; }
.br { width: 14px; height: 13px; margin-right: 7px; color: #a8aaa8; }
.bit { width: 13px; height: 13px; padding-top: 2px; margin-right: 7px; color: #222422; font: 700 10px/11px var(--arial); text-align: center; background: linear-gradient(#a8aaa8, #a8aaa8) 0 2px / 13px 11px no-repeat, linear-gradient(#a8aaa8, #a8aaa8) 2px 0 / 3px 2px no-repeat, linear-gradient(#a8aaa8, #a8aaa8) 8px 0 / 3px 2px no-repeat; }
.tree mark { background: #9c9e9c; color: #333533; padding: 0 8px 0 3px; margin-left: -3px; height: 15px; line-height: 16px; }
.tree .sel { background: #2f3131; }
.listfoot { height: 19px; display: flex; justify-content: flex-end; padding-right: 8px; }
.listfoot svg { width: 13px; height: 13px; color: #b0b2b0; }
.side .paragraph { border: 0; }
.aligns { display: flex; gap: 6px; height: 33px; padding: 4px 0 7px 8px; margin: 0 19px 0 0; border-bottom: 2px solid #303230; }
.aligns button { width: 20px; height: 20px; color: #b0b2b0; }
.aligns svg { width: 16px; height: 15px; }
.aligns .spaced { margin-left: 6px; }
.on { color: #2e7cd8; background: #101820; }
.aligns .on { color: #2e7cd8; }
.indents { display: grid; grid-template-columns: 75px 70px 1fr; grid-auto-rows: 19px; padding: 1px 0 0 8px; color: #838583; }
.indents > div { display: flex; align-items: center; gap: 5px; }
.indents svg { width: 17px; height: 16px; color: #a8aaa8; }
.indents button { color: var(--blue); }
.indents .dir { gap: 6px; }
.dir button { width: 20px; height: 19px; }
.indents .dir svg { width: 18px; height: 14px; color: inherit; }
.indents .dir button:last-child { color: #a8aaa8; }
.scroll { width: 12px; flex: none; background: #1b1c1b; padding-right: 2px; }
.scroll i { display: block; height: 414px; background: #2e302e; }

.timeline { flex: 1; min-height: 0; display: flex; flex-direction: column; }
.timeline .tabs { height: 28px; flex: none; }
.timeline .tabs .chip { margin-right: 12px; }
.rq { margin: 0 59px 0 27px; }
.c1 { margin-right: 58px; }
.c2 { margin-right: 45px; }
.tlbody { flex: 1; min-height: 0; display: flex; }
.layers { width: 776px; flex: none; border-right: 1px solid #0e0f0e; }
.tltop { height: 40px; display: flex; align-items: center; }
.clock { width: 114px; display: flex; flex-direction: column; align-items: center; padding-right: 3px; }
.clock button { font-size: 17px; font-weight: 500; line-height: 18px; color: #3a8ce6; }
.clock small { font: 11px/12px var(--arial); color: #24486e; white-space: nowrap; }
.tlfind { width: 484px; height: 19px; background: var(--dark); display: flex; align-items: center; padding-left: 4px; }
.tlfind svg { width: 20px; height: 16px; color: #b0b2b0; }
.tlfind input { flex: 1; min-width: 0; }
.tlicons { flex: 1; display: flex; justify-content: space-between; padding: 0 16px 0 17px; color: #a8aaa8; }
.tlicons svg { width: 18px; height: 18px; }
.tlicons button:first-child { margin-right: 9px; }
.tlicons button:last-child { margin-left: 9px; }
.row { height: 18px; display: flex; align-items: center; font: 13px/18px var(--arial); color: #979997; }
.row svg { color: #a8aaa8; }
.row svg.blue { color: var(--blue); }
.cols { height: 19px; background: #2c2e2c; border: solid #0e0f0e; border-width: 1px 0; font: 10px/17px var(--ui); }
.layer { background: #3c3e3c; }
.c-av { width: 69px; display: flex; gap: 1px; padding-left: 3px; }
.c-av svg, .c-av i, .c-sw svg, .c-sw i { width: 15px; height: 13px; }
.c-av .well, .c-sw .well, .c-t .well { background: #303230; height: 17px; }
.c-tag { width: 34px; display: flex; align-items: center; justify-content: center; }
.c-tag svg:only-child { width: 14px; height: 14px; margin-left: 8px; }
.c-num { width: 34px; padding-left: 6px; }
.c-src { width: 181px; display: flex; align-items: center; padding-left: 5px; }
.c-sw { width: 143px; display: flex; gap: 1px; padding-left: 3px; }
.c-mode { width: 78px; padding-left: 6px; }
.c-t { width: 22px; padding-left: 9px; }
.c-trk { width: 75px; padding-left: 3px; }
.c-par { width: 123px; padding-left: 5px; display: flex; align-items: center; }
.cols .c-tag, .cols .c-num, .cols .c-src, .cols .c-sw, .cols .c-mode, .cols .c-par { border-left: 1px solid #121312; }
.layer .c-tag { gap: 3px; padding-left: 14px; }
.c-num.one { color: #8ab89c; font-weight: 700; font-size: 14px; padding-left: 8px; }
.solid { width: 13px; height: 13px; background: #fff; flex: none; }
.layer .c-src { padding: 0 0 0 4px; gap: 3px; }
.layer .c-src input { flex: 1; min-width: 0; border: 1px solid #b0b2b0; height: 17px; padding: 2px 0 0 4px; font-weight: 700; }
.layer .c-mode { padding: 0 1px 0 3px; }
.layer .c-t { padding: 0 0 0 4px; }
.layer .c-t .well { display: block; width: 14px; }
.row .pick { background: #1d1f1d; height: 17px; flex: 1; }
.layer .c-par { gap: 6px; padding-right: 5px; }
.c-lead { width: 110px; padding-left: 2px; }
.lab { background: #4a4c4a; height: 17px; line-height: 18px; padding: 0 4px; margin-right: 5px; }
.fxrow .lab { width: 193px; margin-left: 5px; }
.c-keys { width: 142px; display: flex; gap: 6px; padding-left: 4px; }
.keyrow .lab { width: 139px; }
.mini { width: 14px; height: 12px; margin: 0 4px 0 5px; }
.c-val { width: 330px; display: flex; }

.tracks { flex: 1; min-width: 0; position: relative; overflow: hidden; padding: 8px 25px 0 7px; display: flex; flex-direction: column; }
.navbar, .workbar { position: relative; flex: none; background: #646664; }
.navbar { height: 9px; }
.workbar { height: 16px; background: #5c5e5b; border-top: 1px solid #111; }
.cap { position: absolute; top: 0; bottom: 0; width: 6px; background: #2e86e0; }
.cap.l { left: -7px; border-radius: 5px 0 0 5px; }
.cap.r { right: -7px; border-radius: 0 5px 5px 0; }
.ruler { height: 21px; flex: none; display: grid; grid-template-columns: repeat(11, 1fr); margin: 0 -5%; text-align: center; font: 13px/18px var(--ui); color: #8b8d8b; }
.ruler li { background: linear-gradient(#777, #777) center bottom / 1px 5px no-repeat; }
.cache { height: 5px; flex: none; border: solid #101210; border-width: 1px 0; background: linear-gradient(90deg, transparent 8%, #2b9c3c 8% 11%, transparent 11% 18%, #2b9c3c 18%), repeating-linear-gradient(90deg, #2b9c3c 0 8px, #16301a 8px 12px, #2b9c3c 12px 15px, #16301a 15px 20px); }
.bar { height: 17px; flex: none; background: #a84646; border-left: 1px solid #c9a0a0; }
.lane { height: 18px; flex: none; background: #30322f; border-bottom: 1px solid #262826; }
.lane.rest { flex: 1; border: 0; }
.mk { position: absolute; right: 2px; top: 39px; width: 12px; height: 14px; color: #b0b2b0; }
.cb { position: absolute; right: 1px; top: 60px; width: 16px; height: 14px; color: #b0b2b0; }
.keyframe { position: absolute; left: 3px; top: 99px; width: 10px; height: 10px; }
.playhead { position: absolute; left: 56px; top: 8px; bottom: 0; width: 1px; background: #3478b0; }
.playhead svg { position: absolute; left: -6px; top: 14px; width: 13px; height: 14px; }
.ibeam { position: absolute; left: 52px; top: 79px; width: 8px; height: 14px; }
.pointer { position: absolute; left: 97px; top: 67px; width: 54px; height: 54px; }

.status { height: 16px; flex: none; border-top: 1px solid #0c0d0c; display: flex; align-items: center; padding: 0 0 0 5px; gap: 5px; overflow: hidden; }
.status button { color: #a8aaa8; }
.status .blue { color: var(--blue); }
.frt { margin-left: 8px; line-height: 15px; }
.frt b { color: #8cc49a; margin-left: 3px; }
.zoomer { margin-left: auto; margin-right: 597px; display: flex; align-items: center; gap: 11px; }
.zoomer svg { width: 16px; height: 10px; color: #a8aaa8; }
.zoomer input { appearance: none; width: 50px; height: 10px; background: linear-gradient(#444, #444) center / 100% 2px no-repeat; }
.zoomer input::-webkit-slider-thumb { appearance: none; width: 10px; height: 10px; border: 2px solid #a8aaa8; border-radius: 50%; background: var(--bg); }
```
